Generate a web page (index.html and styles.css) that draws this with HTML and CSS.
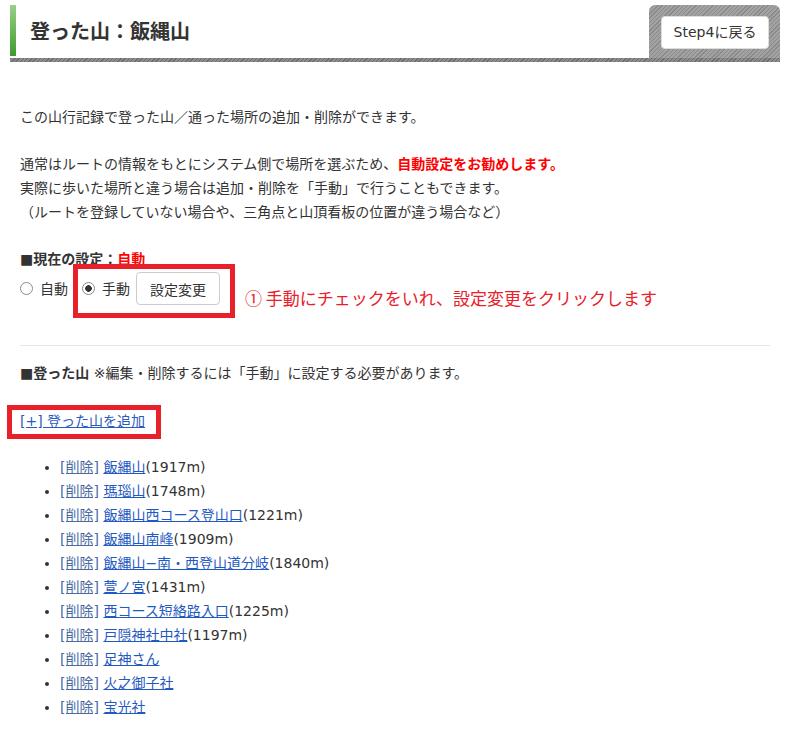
FILE: index.html
```html
<!DOCTYPE html>
<html lang="ja">
<head>
<meta charset="utf-8">
<title>登った山：飯縄山</title>
<link rel="stylesheet" href="styles.css">
</head>
<body>
<header class="head">
  <div class="head-row">
    <h1 class="title">登った山：飯縄山</h1>
    <div class="tab"><a class="back-btn" href="#">Step4に戻る</a></div>
  </div>
  <div class="head-stripe"></div>
</header>
<main class="content">
  <p class="intro">この山行記録で登った山／通った場所の追加・削除ができます。</p>
  <p class="desc">通常はルートの情報をもとにシステム側で場所を選ぶため、<strong class="red">自動設定をお勧めします。</strong><br>実際に歩いた場所と違う場合は追加・削除を「手動」で行うこともできます。<br>（ルートを登録していない場合や、三角点と山頂看板の位置が違う場合など）</p>
  <p class="setting-title"><b>■現在の設定：<span class="red">自動</span></b></p>
  <div class="mode-row">
    <label class="radio"><input type="radio" name="mode" value="auto">自動</label>
    <label class="radio radio-manual"><input type="radio" name="mode" value="manual" checked>手動</label>
    <button class="btn" type="button">設定変更</button>
    <span class="note">① 手動にチェックをいれ、設定変更をクリックします</span>
    <span class="mark mark-mode"></span>
  </div>
  <hr class="sep">
  <p class="peaks-title"><b>■登った山</b> ※編集・削除するには「手動」に設定する必要があります。</p>
  <div class="add-wrap"><a class="add-link" href="#">[+] 登った山を追加</a></div>
  <ul class="peaks">
    <li><a class="del" href="#">[削除]</a> <a class="name" href="#">飯縄山</a>(1917m)</li>
    <li><a class="del" href="#">[削除]</a> <a class="name" href="#">瑪瑙山</a>(1748m)</li>
    <li><a class="del" href="#">[削除]</a> <a class="name" href="#">飯縄山西コース登山口</a>(1221m)</li>
    <li><a class="del" href="#">[削除]</a> <a class="name" href="#">飯縄山南峰</a>(1909m)</li>
    <li><a class="del" href="#">[削除]</a> <a class="name" href="#">飯縄山−南・西登山道分岐</a>(1840m)</li>
    <li><a class="del" href="#">[削除]</a> <a class="name" href="#">萱ノ宮</a>(1431m)</li>
    <li><a class="del" href="#">[削除]</a> <a class="name" href="#">西コース短絡路入口</a>(1225m)</li>
    <li><a class="del" href="#">[削除]</a> <a class="name" href="#">戸隠神社中社</a>(1197m)</li>
    <li><a class="del" href="#">[削除]</a> <a class="name" href="#">足神さん</a></li>
    <li><a class="del" href="#">[削除]</a> <a class="name" href="#">火之御子社</a></li>
    <li><a class="del" href="#">[削除]</a> <a class="name" href="#">宝光社</a></li>
  </ul>
</main>
</body>
</html>
```

FILE: styles.css
```css
html, body {
  margin: 0;
  padding: 0;
  background: #fff;
}
body {
  font-family: "DejaVu Sans", "Noto Sans CJK JP", sans-serif;
  font-size: 14px;
  line-height: 24px;
  color: #333;
}

/* header */
.head {
  margin: 0 6px 0 10px;
  padding-top: 5px;
}
.head-row {
  display: flex;
  align-items: stretch;
  height: 53px;
}
.title {
  flex: 1;
  margin: 0 0 2px 0;
  padding-left: 14px;
  border-left: 6px solid #5aae44;
  border-image: linear-gradient(to bottom, #9dd08c, #3c9a2a) 1;
  font-family: "Noto Sans CJK JP", sans-serif;
  font-size: 20px;
  font-weight: bold;
  color: #333;
  line-height: 51px;
}
.tab {
  width: 131px;
  box-sizing: border-box;
  padding: 11px 11px 0 12px;
  border-radius: 6px 6px 0 0;
  background: repeating-linear-gradient(-45deg, #8a8a8a 0 1px, #a2a2a2 1px 3px);
}
.back-btn {
  display: block;
  height: 33px;
  box-sizing: border-box;
  border: 1px solid #ddd;
  border-radius: 4px;
  background: #fff;
  color: #333;
  text-decoration: none;
  text-align: center;
  line-height: 31px;
  font-size: 14px;
}
.head-stripe {
  height: 4px;
  background: repeating-linear-gradient(-45deg, #6c6c6c 0 1px, #8c8c8c 1px 3px);
}

/* content */
.content {
  margin: 0 16px 0 20px;
}
.content p {
  margin: 0;
}
.intro {
  margin-top: 43px !important;
}
.desc {
  margin-top: 23px !important;
}
.red {
  color: #ff0000;
  font-weight: bold;
}
.setting-title {
  margin-top: 23px !important;
}

.mode-row {
  position: relative;
  display: flex;
  align-items: center;
  height: 33px;
  margin-top: 1px;
}
.radio {
  display: flex;
  align-items: center;
  gap: 7px;
  color: #333;
}
.radio-manual {
  margin-left: 14px;
}
.radio input {
  appearance: none;
  -webkit-appearance: none;
  width: 13px;
  height: 13px;
  margin: 0;
  border: 1px solid #8a8a8a;
  border-radius: 50%;
  background: #fff;
  box-sizing: border-box;
}
.radio input:checked {
  background: radial-gradient(circle, #333 0 3px, #fff 3.6px);
}
.btn {
  margin-left: 6px;
  height: 33px;
  padding: 0 13px;
  border: 1px solid #ccc;
  border-radius: 4px;
  background: #fff;
  color: #333;
  font-family: "Noto Sans CJK JP", sans-serif;
  font-size: 14px;
}
.note {
  align-self: flex-start;
  margin: 14px 0 0 25px;
  color: #e8202a;
  font-family: "Noto Sans CJK JP", sans-serif;
  font-size: 17px;
  line-height: 24px;
  white-space: nowrap;
}
.mark {
  border: 5px solid #e8202a;
  box-sizing: border-box;
}
.mark-mode {
  position: absolute;
  left: 53px;
  top: -8px;
  width: 162px;
  height: 54px;
}

.sep {
  margin: 40px 0 0 0;
  border: 0;
  height: 1px;
  background: #e6e6e6;
}
.peaks-title {
  margin-top: 15px !important;
}

.add-wrap {
  margin: 20px 0 0 -13px;
}
.add-link {
  display: inline-block;
  border: 5px solid #e8202a;
  padding: 0 11px 2px 8px;
  line-height: 22px;
  color: #2a5cc0;
  text-decoration: underline;
}

.peaks {
  margin: 16px 0 0 0;
  padding-left: 40px;
}
.peaks li {
  line-height: 24px;
}
.peaks li::marker {
  color: #333;
}
.del {
  color: #4a6aa3;
  text-decoration: underline;
}
.name {
  color: #1f5ac2;
  text-decoration: underline;
}
```
